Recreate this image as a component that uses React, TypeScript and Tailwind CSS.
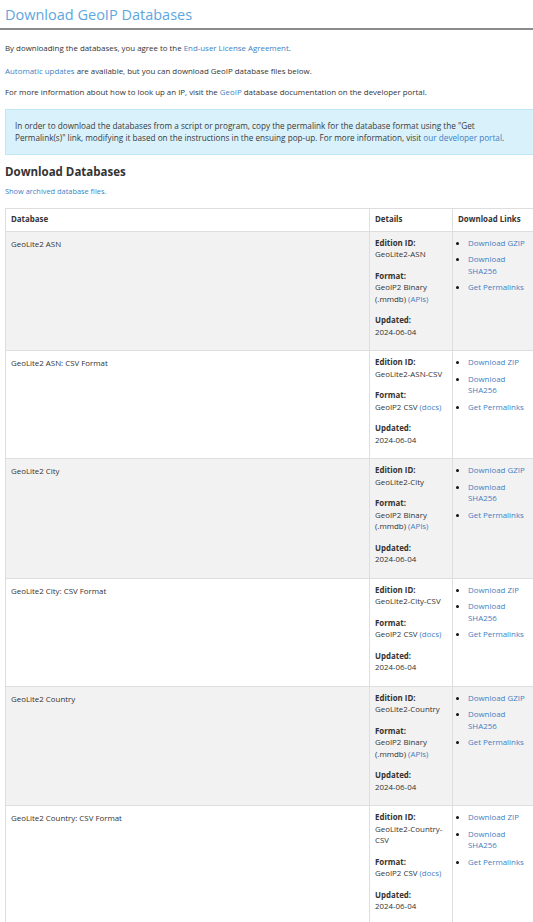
import React from "react";

type Row = {
  name: string;
  edition: string;
  format: string;
  formatLink: string;
  updated: string;
  archive: string;
  gray: boolean;
};

const rows: Row[] = [
  { name: "GeoLite2 ASN", edition: "GeoLite2-ASN", format: "GeoIP2 Binary (.mmdb)", formatLink: "APIs", updated: "2024-06-04", archive: "GZIP", gray: true },
  { name: "GeoLite2 ASN: CSV Format", edition: "GeoLite2-ASN-CSV", format: "GeoIP2 CSV", formatLink: "docs", updated: "2024-06-04", archive: "ZIP", gray: false },
  { name: "GeoLite2 City", edition: "GeoLite2-City", format: "GeoIP2 Binary (.mmdb)", formatLink: "APIs", updated: "2024-06-04", archive: "GZIP", gray: true },
  { name: "GeoLite2 City: CSV Format", edition: "GeoLite2-City-CSV", format: "GeoIP2 CSV", formatLink: "docs", updated: "2024-06-04", archive: "ZIP", gray: false },
  { name: "GeoLite2 Country", edition: "GeoLite2-Country", format: "GeoIP2 Binary (.mmdb)", formatLink: "APIs", updated: "2024-06-04", archive: "GZIP", gray: true },
  { name: "GeoLite2 Country: CSV Format", edition: "GeoLite2-Country-CSV", format: "GeoIP2 CSV", formatLink: "docs", updated: "2024-06-04", archive: "ZIP", gray: false },
];

const link = "text-[#3f7fc4]";

function DbRow({ r }: { r: Row }) {
  const bg = r.gray ? "bg-[#f2f2f2]" : "bg-white";
  return (
    <tr className={bg}>
      <td className="border border-[#dedede] px-[5px] pt-[7px] pb-[12px] align-top">{r.name}</td>
      <td className="border border-[#dedede] px-[5px] pt-[6px] pb-[12px] align-top">
        <div className="font-bold">Edition ID:</div>
        <div className="break-words">{r.edition}</div>
        <div className="mt-[10px] font-bold">Format:</div>
        <div>
          {r.format} <span className={link}>({r.formatLink})</span>
        </div>
        <div className="mt-[10px] font-bold">Updated:</div>
        <div>{r.updated}</div>
      </td>
      <td className="border border-[#dedede] pl-[3px] pr-[2px] pt-[6px] pb-[12px] align-top">
        <ul className="flex flex-col gap-[5px]">
          {[`Download ${r.archive}`, "Download SHA256", "Get Permalinks"].map((t) => (
            <li key={t} className="flex">
              <span className="flex h-[11.5px] w-[12px] shrink-0 items-center">
                <span className="h-[3px] w-[3px] rounded-full bg-[#111]" />
              </span>
              <span className={`w-[60px] ${link}`}>{t}</span>
            </li>
          ))}
        </ul>
      </td>
    </tr>
  );
}

export default function App() {
  return (
    <div className="w-[533px] min-h-[922px] overflow-hidden bg-white font-['Open_Sans',sans-serif] text-[7.9px] leading-[11.5px] text-[#333]">
      <h1 className="border-b-2 border-[#8c8c8c] px-[5px] pt-[6px] pb-[5px] text-[14.5px] leading-[17px] text-[#5ea6e0]">
        Download GeoIP Databases
      </h1>
      <div className="px-[5px]">
        <p className="mt-[13px]">
          By downloading the databases, you agree to the <span className={link}>End-user License Agreement</span>.
        </p>
        <p className="mt-[11px]">
          <span className={link}>Automatic updates</span> are available, but you can download GeoIP database files below.
        </p>
        <p className="mt-[10px]">
          For more information about how to look up an IP, visit the <span className={link}>GeoIP</span> database documentation on the developer portal.
        </p>
        <div className="mt-[10px] -mr-[10px] border border-[#bfe8f4] bg-[#d8f1fa] px-[9px] py-[10px] text-[8.2px] leading-[12px] text-[#3a3a3a]">
          In order to download the databases from a script or program, copy the permalink for the database format using the "Get
          <br />
          Permalink(s)" link, modifying it based on the instructions in the ensuing pop-up. For more information, visit{" "}
          <span className={link}>our developer portal</span>.
        </div>
        <h2 className="mt-[9px] text-[11.5px] font-bold leading-[16px] text-[#333]">Download Databases</h2>
        <p className={`mt-[6px] text-[7.4px] ${link}`}>Show archived database files.</p>
        <table className="mt-[11px] w-[540px] table-fixed border-collapse">
          <colgroup>
            <col className="w-[364px]" />
            <col className="w-[83px]" />
            <col className="w-[93px]" />
          </colgroup>
          <thead>
            <tr className="bg-white">
              <th className="border border-[#dedede] px-[5px] py-[5px] text-left font-bold">Database</th>
              <th className="border border-[#dedede] px-[5px] py-[5px] text-left font-bold">Details</th>
              <th className="border border-[#dedede] px-[5px] py-[5px] text-left font-bold">Download Links</th>
            </tr>
          </thead>
          <tbody>
            {rows.map((r) => (
              <DbRow key={r.edition} r={r} />
            ))}
          </tbody>
        </table>
      </div>
    </div>
  );
}
